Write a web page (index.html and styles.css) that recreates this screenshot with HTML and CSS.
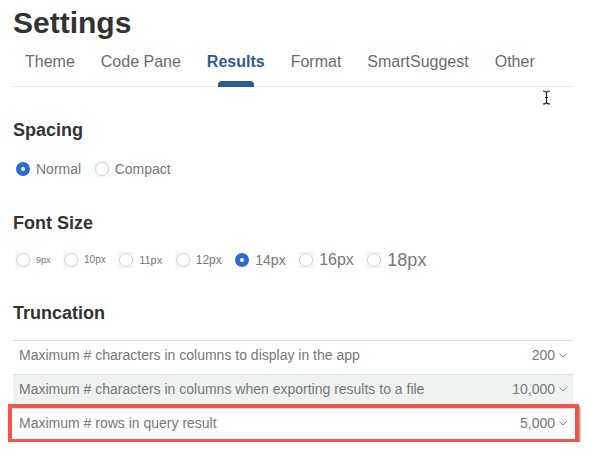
FILE: index.html
```html
<!DOCTYPE html>
<html>
<head>
<meta charset="utf-8">
<link rel="stylesheet" href="styles.css">
</head>
<body>
<div class="page">
  <h1 class="title">Settings</h1>
  <nav class="tabs">
    <span class="tab">Theme</span>
    <span class="tab">Code Pane</span>
    <span class="tab active">Results</span>
    <span class="tab">Format</span>
    <span class="tab">SmartSuggest</span>
    <span class="tab">Other</span>
  </nav>

  <section class="sec sec-spacing">
    <h2 class="heading">Spacing</h2>
    <div class="options">
      <label class="opt"><span class="rbox"><span class="radio checked"></span></span><span class="lbl">Normal</span></label>
      <label class="opt"><span class="rbox"><span class="radio"></span></span><span class="lbl">Compact</span></label>
    </div>
  </section>

  <section class="sec sec-font">
    <h2 class="heading">Font Size</h2>
    <div class="options fs">
      <label class="opt"><span class="rbox"><span class="radio"></span></span><span class="lbl s9">9px</span></label>
      <label class="opt"><span class="rbox"><span class="radio"></span></span><span class="lbl s10">10px</span></label>
      <label class="opt"><span class="rbox"><span class="radio"></span></span><span class="lbl s11">11px</span></label>
      <label class="opt"><span class="rbox"><span class="radio"></span></span><span class="lbl s12">12px</span></label>
      <label class="opt"><span class="rbox"><span class="radio checked"></span></span><span class="lbl s14">14px</span></label>
      <label class="opt"><span class="rbox"><span class="radio"></span></span><span class="lbl s16">16px</span></label>
      <label class="opt"><span class="rbox"><span class="radio"></span></span><span class="lbl s18">18px</span></label>
    </div>
  </section>

  <section class="sec sec-trunc">
    <h2 class="heading">Truncation</h2>
    <div class="table">
      <div class="trow">
        <span>Maximum # characters in columns to display in the app</span>
        <span class="val">200<svg class="chev" width="8" height="5" viewBox="0 0 8 5"><polyline points="0.5,0.5 4,4 7.5,0.5" fill="none" stroke="#8a8a8a" stroke-width="1"/></svg></span>
      </div>
      <div class="trow alt">
        <span>Maximum # characters in columns when exporting results to a file</span>
        <span class="val">10,000<svg class="chev" width="8" height="5" viewBox="0 0 8 5"><polyline points="0.5,0.5 4,4 7.5,0.5" fill="none" stroke="#8a8a8a" stroke-width="1"/></svg></span>
      </div>
      <div class="trow highlighted">
        <span>Maximum # rows in query result</span>
        <span class="val">5,000<svg class="chev" width="8" height="5" viewBox="0 0 8 5"><polyline points="0.5,0.5 4,4 7.5,0.5" fill="none" stroke="#8a8a8a" stroke-width="1"/></svg></span>
      </div>
    </div>
  </section>

  <svg class="cursor" width="9" height="15" viewBox="0 0 9 15">
    <path d="M1,1 Q4.5,1 4.5,3 Q4.5,1 8,1 M4.5,3 V12 M1,14 Q4.5,14 4.5,12 Q4.5,14 8,14 M3,7.5 H6" fill="none" stroke="#fff" stroke-width="2.6"/>
    <path d="M1,1 Q4.5,1 4.5,3 Q4.5,1 8,1 M4.5,3 V12 M1,14 Q4.5,14 4.5,12 Q4.5,14 8,14 M3,7.5 H6" fill="none" stroke="#222" stroke-width="1.1"/>
  </svg>
</div>
</body>
</html>
```

FILE: styles.css
```css
html, body {
  margin: 0;
  padding: 0;
  background: #fff;
}

body {
  font-family: "Liberation Sans", Arial, Helvetica, sans-serif;
}

.page {
  position: relative;
  padding: 6px 16px 0 13px;
}

.title {
  margin: 0;
  font-size: 30px;
  line-height: 34px;
  font-weight: bold;
  color: #333;
}

.tabs {
  display: flex;
  border-bottom: 1px solid #e8e8e8;
}

.tab {
  position: relative;
  padding: 12px 13px 14px;
  font-size: 16px;
  line-height: 20px;
  color: #6b6b6b;
}

.tab:first-child {
  margin-left: -1px;
}

.tab.active {
  color: #2e5b92;
  font-weight: bold;
}

.tab.active::after {
  content: "";
  position: absolute;
  left: 50%;
  bottom: -1px;
  width: 36px;
  height: 6px;
  transform: translateX(-50%);
  background: #2e5b92;
  border-radius: 4px 4px 0 0;
}

.heading {
  margin: 0;
  font-size: 18px;
  line-height: 22px;
  font-weight: bold;
  color: #333;
}

.sec-spacing {
  margin-top: 32px;
}

.sec-spacing .options {
  margin-top: 17px;
}

.sec-font {
  margin-top: 32px;
}

.sec-font .options {
  margin-top: 15px;
}

.sec-trunc {
  margin-top: 31px;
}

.options {
  display: flex;
  align-items: center;
  height: 22px;
}

.opt {
  display: flex;
  align-items: center;
  margin-right: 12.5px;
  color: #777;
}

.opt:first-child {
  margin-left: 2px;
}

.rbox {
  display: flex;
  align-items: center;
  justify-content: center;
  width: 16px;
  height: 16px;
  background: #f6f8f8;
  margin-right: 5px;
}

.radio {
  display: block;
  width: 14px;
  height: 14px;
  box-sizing: border-box;
  border-radius: 50%;
  border: 1px solid #cfd3d4;
  background: #fff;
}

.radio.checked {
  border: 5px solid #2b6bd2;
}

.rbox:has(.checked) {
  background: transparent;
}

.lbl {
  font-size: 14px;
  line-height: 18px;
}

.s9 { font-size: 9px; }
.s10 { font-size: 10px; }
.s11 { font-size: 11px; }
.s12 { font-size: 12px; }
.s14 { font-size: 14px; }
.s16 { font-size: 16px; }
.s18 { font-size: 18px; }

.table {
  margin-top: 16px;
}

.trow {
  position: relative;
  display: flex;
  justify-content: space-between;
  align-items: center;
  padding: 5px 6px 10px;
  line-height: 18px;
  font-size: 14px;
  color: #777;
  border-top: 1px solid #dedede;
}

.trow.alt {
  background: #eef3f1;
}

.val {
  display: flex;
  align-items: center;
  gap: 4px;
}

.chev {
  display: block;
  margin-top: 1px;
}

.trow.highlighted::after {
  content: "";
  position: absolute;
  left: -5px;
  right: -6px;
  top: -5px;
  bottom: -1px;
  border: 4px solid #f0554a;
  box-shadow: 1px 2px 2px rgba(0, 0, 0, 0.5);
  pointer-events: none;
}

.cursor {
  position: absolute;
  left: 542px;
  top: 90px;
}
```
